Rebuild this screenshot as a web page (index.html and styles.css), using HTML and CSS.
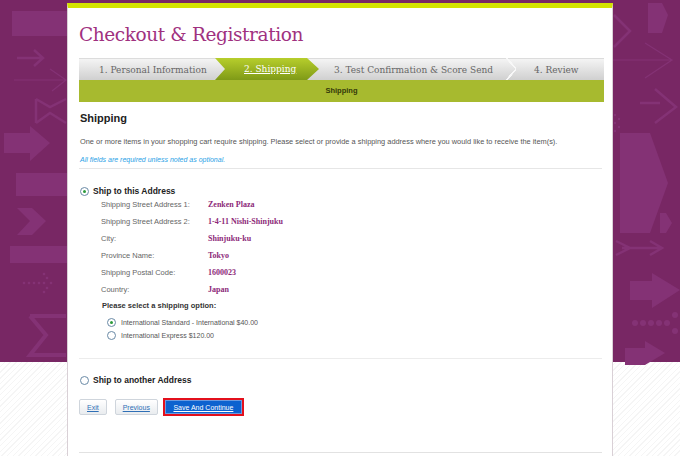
FILE: index.html
```html
<!DOCTYPE html>
<html>
<head>
<meta charset="utf-8">
<link rel="stylesheet" href="styles.css">
</head>
<body>
<div class="page">
  <svg class="bg-art" width="680" height="362" viewBox="0 0 680 362" aria-hidden="true">
    <g fill="#843275">
      <rect x="12" y="8" width="60" height="25"/>
      <rect x="16" y="170" width="56" height="23"/>
      <rect x="10" y="243" width="62" height="17"/>
      <polygon points="4,130 30,130 30,123 50,140 30,158 30,150 4,150"/>
      <polygon points="17,205 32,205 46,218 32,232 17,232 30,218"/>
      <circle cx="24" cy="280" r="1.3"/><circle cx="29" cy="280" r="1.3"/><circle cx="34" cy="280" r="1.3"/><circle cx="39" cy="280" r="1.3"/><circle cx="44" cy="280" r="1.3"/><circle cx="47" cy="275" r="1.3"/><circle cx="47" cy="285" r="1.3"/><circle cx="44" cy="271" r="1.3"/><circle cx="44" cy="289" r="1.3"/><circle cx="51" cy="280" r="1.3"/>
      <polygon points="648,0 662,0 668,12 662,30 648,30"/>
      <polygon points="620,130 650,130 668,180 650,230 620,230"/>
      <polygon points="660,210 666,210 672,220 666,230 660,230"/>
      <polygon points="630,278 652,278 652,270 680,287 652,305 652,297 630,297"/>
      <polygon points="625,345 645,345 645,338 665,350 645,362 625,362"/>
      <circle cx="635" cy="320" r="3"/><circle cx="643" cy="320" r="3"/><circle cx="651" cy="320" r="3"/><circle cx="659" cy="320" r="3"/><circle cx="667" cy="320" r="3"/><circle cx="675" cy="312" r="3"/><circle cx="675" cy="328" r="3"/>
      <circle cx="615" cy="112" r="1.2"/><circle cx="619" cy="116" r="1.2"/><circle cx="615" cy="120" r="1.2"/><circle cx="619" cy="124" r="1.2"/><circle cx="615" cy="128" r="1.2"/>
    </g>
    <g fill="none" stroke="#843275" stroke-width="2.5">
      <path d="M17 55 H42 M34 47 L43 55 L34 63"/>
      <path d="M14 77 H66 M50 66 L66 77 L52 88" stroke-width="1.2"/>
      <path d="M36 96 L50 104 L66 96 M36 120 L50 110 L66 120 M36 96 V120"/>
      <path d="M30 313 L66 313 M30 313 L46 332 L30 352 L66 352" stroke-width="4"/>
      <path d="M614 12 L630 28 L614 44"/>
      <path d="M613 57 H672 M645 40 L672 57 L645 75" stroke-width="1.2"/>
      <path d="M640 100 H660 M655 86 L676 104 L655 120"/>
      <path d="M616 238 L630 245 L616 252 M622 245 H660 M650 238 L662 245 L650 252"/>
    </g>
  </svg>

  <main class="card">
    <h1 class="title">Checkout &amp; Registration</h1>

    <nav class="steps">
      <div class="step-row">
        <span class="step step-1">1. Personal Information</span>
        <span class="step step-2 active"><a href="#">2. Shipping</a></span>
        <span class="step step-3">3. Test Confirmation &amp; Score Send</span>
        <span class="step step-4">4. Review</span>
      </div>
      <div class="step-sub">Shipping</div>
    </nav>

    <section class="intro">
      <h2 class="section-title">Shipping</h2>
      <p class="lead">One or more items in your shopping cart require shipping. Please select or provide a shipping address where you would like to receive the item(s).</p>
      <p class="note">All fields are required unless noted as optional.</p>
    </section>

    <section class="address-block">
      <div class="choice"><span class="radio checked"></span><span class="choice-label">Ship to this Address</span></div>
      <dl class="fields">
        <div class="field"><dt>Shipping Street Address 1:</dt><dd>Zenken Plaza</dd></div>
        <div class="field"><dt>Shipping Street Address 2:</dt><dd>1-4-11 Nishi-Shinjuku</dd></div>
        <div class="field"><dt>City:</dt><dd>Shinjuku-ku</dd></div>
        <div class="field"><dt>Province Name:</dt><dd>Tokyo</dd></div>
        <div class="field"><dt>Shipping Postal Code:</dt><dd>1600023</dd></div>
        <div class="field"><dt>Country:</dt><dd>Japan</dd></div>
      </dl>
      <div class="ship-opt-title">Please select a shipping option:</div>
      <div class="options">
        <div class="option"><span class="radio checked"></span><span>International Standard - International $40.00</span></div>
        <div class="option"><span class="radio"></span><span>International Express $120.00</span></div>
      </div>
    </section>

    <section class="other-block">
      <div class="choice"><span class="radio"></span><span class="choice-label">Ship to another Address</span></div>
    </section>

    <div class="actions">
      <a class="btn" href="#">Exit</a>
      <a class="btn" href="#">Previous</a>
      <a class="btn btn-primary" href="#">Save And Continue</a>
    </div>
    <div class="bottom-rule"></div>
  </main>
</div>
</body>
</html>
```
FILE: styles.css
```css
html, body {
  margin: 0;
  padding: 0;
  height: 456px;
  overflow: hidden;
}
body {
  font-family: "Liberation Sans", Arial, sans-serif;
  background:
    linear-gradient(#782764, #782764) top / 100% 362px no-repeat,
    repeating-linear-gradient(135deg, #ffffff 0 3px, #f5f5f5 3px 4px);
}
.page {
  position: relative;
  width: 680px;
  height: 456px;
}
.bg-art {
  position: absolute;
  left: 0;
  top: 0;
}
.card {
  position: relative;
  width: 546px;
  margin: 3px auto 0;
  background: #fff;
  border-top: 5px solid #d3e300;
  border-left: 1px solid #d9d0d6;
  border-right: 1px solid #d9d0d6;
  padding: 0 10px 0 11px;
  box-sizing: border-box;
  height: 460px;
}
.title {
  margin: 0;
  padding-top: 15px;
  font-family: "DejaVu Serif", serif;
  font-weight: normal;
  font-size: 18.5px;
  line-height: 24px;
  letter-spacing: -0.4px;
  color: #a0317f;
  height: 35px;
}

/* steps */
.steps {
  width: 525px;
}
.step-row {
  display: flex;
  height: 22px;
  background: linear-gradient(#f4f4f4, #d0d0d0);
  border-top: 1px solid #dcdcdc;
  box-sizing: border-box;
  font-family: "DejaVu Serif", serif;
  font-size: 9px;
  color: #666;
  align-items: center;
}
.step {
  display: flex;
  align-items: center;
  height: 100%;
  white-space: nowrap;
}
.step-1 {
  width: 136px;
  padding-left: 20px;
  box-sizing: border-box;
}
.step-2 {
  width: 104px;
  padding-left: 29px;
  box-sizing: border-box;
  background: linear-gradient(#b7ce2c, #7f9a17);
  clip-path: polygon(0 0, 92px 0, 104px 50%, 92px 100%, 0 100%, 10px 50%);
  margin-top: -1px;
  height: 22px;
}
.step-2 a {
  color: #fff;
  text-decoration: underline;
}
.step-3 {
  width: 197px;
  padding-left: 15px;
  box-sizing: border-box;
  position: relative;
}
.step-3::after {
  content: "";
  position: absolute;
  right: 0;
  top: -1px;
  width: 10px;
  height: 22px;
  background: linear-gradient(to right top, transparent 46%, #f8f8f8 47%, #f8f8f8 57%, transparent 58%) top / 10px 11px no-repeat,
              linear-gradient(to right bottom, transparent 46%, #f8f8f8 47%, #f8f8f8 57%, transparent 58%) bottom / 10px 11px no-repeat;
}
.step-4 {
  padding-left: 18px;
}
.step-sub {
  height: 22px;
  background: #a7ba2f;
  text-align: center;
  font-weight: bold;
  font-size: 7.5px;
  line-height: 22px;
  color: #33380a;
}

/* intro */
.intro {
  border-bottom: 1px solid #e6e6e6;
  padding-bottom: 3px;
}
.section-title {
  margin: 9px 0 0;
  font-size: 11px;
  line-height: 14px;
  font-weight: bold;
  color: #222;
  padding-left: 1px;
}
.lead {
  margin: 12px 0 0;
  font-size: 7.4px;
  line-height: 10px;
  color: #555;
  padding-left: 1px;
}
.note {
  margin: 8px 0 0;
  font-size: 7px;
  line-height: 10px;
  font-style: italic;
  color: #2aa2e6;
  padding-left: 1px;
}

/* address */
.address-block {
  padding: 17px 0 18px 1px;
  border-bottom: 1px solid #ececec;
}
.choice {
  display: flex;
  align-items: center;
  gap: 4px;
  height: 10px;
}
.choice-label {
  font-size: 8.5px;
  font-weight: bold;
  color: #222;
}
.radio {
  width: 7px;
  height: 7px;
  border: 1px solid #6a8aa6;
  border-radius: 50%;
  background: #fff;
  position: relative;
  flex: none;
}
.radio.checked::after {
  content: "";
  position: absolute;
  left: 2px;
  top: 2px;
  width: 3px;
  height: 3px;
  border-radius: 50%;
  background: #2c9b3c;
}
.fields {
  margin: 0 0 0 21px;
}
.field {
  display: flex;
  height: 17px;
  align-items: center;
}
.field dt {
  width: 107px;
  font-size: 7.5px;
  color: #666;
}
.field dd {
  margin: 0;
  font-family: "Liberation Serif", serif;
  font-weight: bold;
  font-size: 8px;
  color: #8d2a79;
}
.ship-opt-title {
  margin: 3px 0 0 22px;
  font-size: 7.5px;
  font-weight: bold;
  color: #333;
}
.options {
  margin: 8px 0 0 27px;
  display: flex;
  flex-direction: column;
  gap: 4px;
}
.option {
  display: flex;
  align-items: center;
  gap: 5px;
  font-size: 7px;
  color: #555;
  height: 9px;
}

.other-block {
  padding: 16px 0 0 1px;
}

/* actions */
.actions {
  display: flex;
  gap: 8px;
  margin-top: 13px;
  align-items: center;
}
.btn {
  display: inline-flex;
  align-items: center;
  justify-content: center;
  height: 16px;
  padding: 0 7px;
  box-sizing: border-box;
  border: 1px solid #cfd5dc;
  border-radius: 2px;
  background: linear-gradient(#ffffff, #e9ecef);
  color: #2f6fb6;
  font-size: 7px;
  text-decoration: underline;
}
.btn-primary {
  margin-left: -3px;
  height: 18px;
  width: 81px;
  border: 2px solid #e3101c;
  border-radius: 0;
  background: #0d62cf;
  box-shadow: inset 0 0 0 1px #6a9ae0;
  color: #fff;
}
.bottom-rule {
  margin-top: 36px;
  border-top: 1px solid #e2e2e2;
}
```
